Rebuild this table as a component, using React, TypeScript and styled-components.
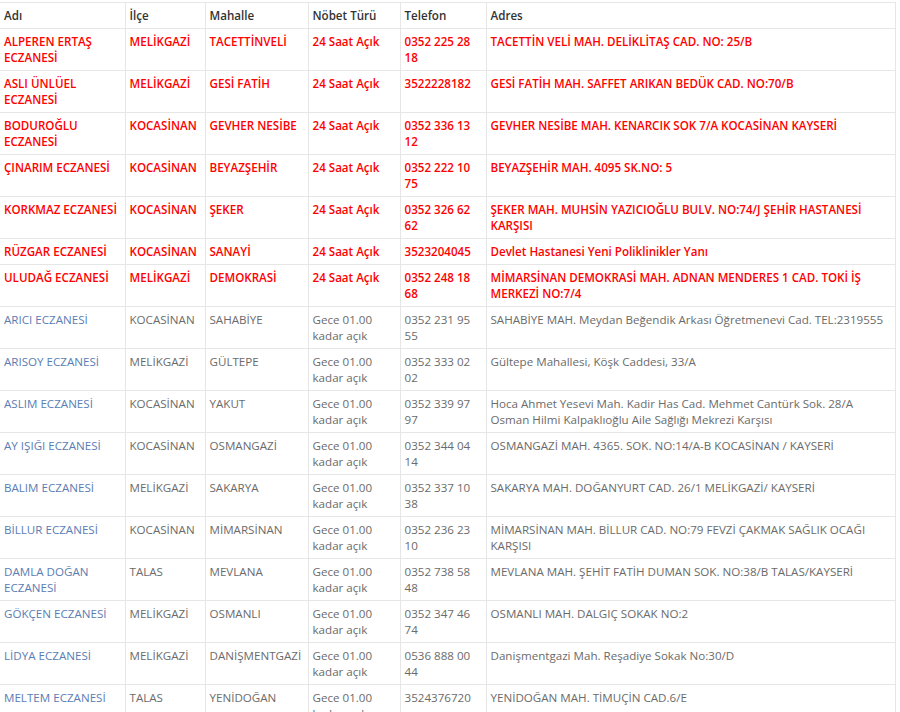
import React from 'react';
import styled, { createGlobalStyle } from 'styled-components';

type Pharmacy = {
  name: string;
  district: string;
  neighbourhood: string;
  duty: string;
  phone: string;
  address: string;
  allDay?: boolean;
};

const pharmacies: Pharmacy[] = [
  { name: 'ALPEREN ERTAŞ ECZANESİ', district: 'MELİKGAZİ', neighbourhood: 'TACETTİNVELİ', duty: '24 Saat Açık', phone: '0352 225 28 18', address: 'TACETTİN VELİ MAH. DELİKLİTAŞ CAD. NO: 25/B', allDay: true },
  { name: 'ASLI ÜNLÜEL ECZANESİ', district: 'MELİKGAZİ', neighbourhood: 'GESİ FATİH', duty: '24 Saat Açık', phone: '3522228182', address: 'GESİ FATİH MAH. SAFFET ARIKAN BEDÜK CAD. NO:70/B', allDay: true },
  { name: 'BODUROĞLU ECZANESİ', district: 'KOCASİNAN', neighbourhood: 'GEVHER NESİBE', duty: '24 Saat Açık', phone: '0352 336 13 12', address: 'GEVHER NESİBE MAH. KENARCIK SOK 7/A KOCASİNAN KAYSERİ', allDay: true },
  { name: 'ÇINARIM ECZANESİ', district: 'KOCASİNAN', neighbourhood: 'BEYAZŞEHİR', duty: '24 Saat Açık', phone: '0352 222 10 75', address: 'BEYAZŞEHİR MAH. 4095 SK.NO: 5', allDay: true },
  { name: 'KORKMAZ ECZANESİ', district: 'KOCASİNAN', neighbourhood: 'ŞEKER', duty: '24 Saat Açık', phone: '0352 326 62 62', address: 'ŞEKER MAH. MUHSİN YAZICIOĞLU BULV. NO:74/J ŞEHİR HASTANESİ KARŞISI', allDay: true },
  { name: 'RÜZGAR ECZANESİ', district: 'KOCASİNAN', neighbourhood: 'SANAYİ', duty: '24 Saat Açık', phone: '3523204045', address: 'Devlet Hastanesi Yeni Poliklinikler Yanı', allDay: true },
  { name: 'ULUDAĞ ECZANESİ', district: 'MELİKGAZİ', neighbourhood: 'DEMOKRASİ', duty: '24 Saat Açık', phone: '0352 248 18 68', address: 'MİMARSİNAN DEMOKRASİ MAH. ADNAN MENDERES 1 CAD. TOKİ İŞ MERKEZİ NO:7/4', allDay: true },
  { name: 'ARICI ECZANESİ', district: 'KOCASİNAN', neighbourhood: 'SAHABİYE', duty: 'Gece 01.00 kadar açık', phone: '0352 231 95 55', address: 'SAHABİYE MAH. Meydan Beğendik Arkası Öğretmenevi Cad. TEL:2319555' },
  { name: 'ARISOY ECZANESİ', district: 'MELİKGAZİ', neighbourhood: 'GÜLTEPE', duty: 'Gece 01.00 kadar açık', phone: '0352 333 02 02', address: 'Gültepe Mahallesi, Köşk Caddesi, 33/A' },
  { name: 'ASLIM ECZANESİ', district: 'KOCASİNAN', neighbourhood: 'YAKUT', duty: 'Gece 01.00 kadar açık', phone: '0352 339 97 97', address: 'Hoca Ahmet Yesevi Mah. Kadir Has Cad. Mehmet Cantürk Sok. 28/A Osman Hilmi Kalpaklıoğlu Aile Sağlığı Mekrezi Karşısı' },
  { name: 'AY IŞIĞI ECZANESİ', district: 'KOCASİNAN', neighbourhood: 'OSMANGAZİ', duty: 'Gece 01.00 kadar açık', phone: '0352 344 04 14', address: 'OSMANGAZİ MAH. 4365. SOK. NO:14/A-B KOCASİNAN / KAYSERİ' },
  { name: 'BALIM ECZANESİ', district: 'MELİKGAZİ', neighbourhood: 'SAKARYA', duty: 'Gece 01.00 kadar açık', phone: '0352 337 10 38', address: 'SAKARYA MAH. DOĞANYURT CAD. 26/1 MELİKGAZİ/ KAYSERİ' },
  { name: 'BİLLUR ECZANESİ', district: 'KOCASİNAN', neighbourhood: 'MİMARSİNAN', duty: 'Gece 01.00 kadar açık', phone: '0352 236 23 10', address: 'MİMARSİNAN MAH. BİLLUR CAD. NO:79 FEVZİ ÇAKMAK SAĞLIK OCAĞI KARŞISI' },
  { name: 'DAMLA DOĞAN ECZANESİ', district: 'TALAS', neighbourhood: 'MEVLANA', duty: 'Gece 01.00 kadar açık', phone: '0352 738 58 48', address: 'MEVLANA MAH. ŞEHİT FATİH DUMAN SOK. NO:38/B TALAS/KAYSERİ' },
  { name: 'GÖKÇEN ECZANESİ', district: 'MELİKGAZİ', neighbourhood: 'OSMANLI', duty: 'Gece 01.00 kadar açık', phone: '0352 347 46 74', address: 'OSMANLI MAH. DALGIÇ SOKAK NO:2' },
  { name: 'LİDYA ECZANESİ', district: 'MELİKGAZİ', neighbourhood: 'DANİŞMENTGAZİ', duty: 'Gece 01.00 kadar açık', phone: '0536 888 00 44', address: 'Danişmentgazi Mah. Reşadiye Sokak No:30/D' },
  { name: 'MELTEM ECZANESİ', district: 'TALAS', neighbourhood: 'YENİDOĞAN', duty: 'Gece 01.00 kadar açık', phone: '3524376720', address: 'YENİDOĞAN MAH. TİMUÇİN CAD.6/E' },
];

const columns = [
  { label: 'Adı', width: 125 },
  { label: 'İlçe', width: 80 },
  { label: 'Mahalle', width: 103 },
  { label: 'Nöbet Türü', width: 92 },
  { label: 'Telefon', width: 86 },
  { label: 'Adres', width: 409 },
];

const GlobalStyle = createGlobalStyle`
  html, body {
    margin: 0;
    padding: 0;
    background: #fff;
    overflow: hidden;
  }
  body {
    font-family: "Open Sans", "Liberation Sans", sans-serif;
    font-size: 11.6px;
  }
`;

const Page = styled.div`
  padding-top: 2px;
`;

const Table = styled.table`
  width: 895px;
  table-layout: fixed;
  border-collapse: collapse;
  border-right: 1px solid #e6e6e6;
  border-top: 1px solid #e6e6e6;
`;

const HeadCell = styled.th`
  text-align: left;
  font-weight: 600;
  color: #333;
  padding: 5px 4px 4px;
  line-height: 16px;
  border: 1px solid #e6e6e6;
  border-left: none;
  vertical-align: top;
`;

const Cell = styled.td<{ $allDay?: boolean }>`
  padding: 5px 4px 4px;
  line-height: 16px;
  vertical-align: top;
  border: 1px solid #e6e6e6;
  color: ${({ $allDay }) => ($allDay ? '#ff0000' : '#6b6b6b')};
  font-weight: ${({ $allDay }) => ($allDay ? 600 : 400)};
  word-wrap: break-word;

  &:first-child {
    border-left: none;
  }
`;

const NameLink = styled.a<{ $allDay?: boolean }>`
  color: ${({ $allDay }) => ($allDay ? '#ff0000' : '#5a7db4')};
  text-decoration: none;
`;

export default function App() {
  return (
    <Page>
      <GlobalStyle />
      <Table>
        <colgroup>
          {columns.map((c) => (
            <col key={c.label} style={{ width: c.width }} />
          ))}
        </colgroup>
        <thead>
          <tr>
            {columns.map((c) => (
              <HeadCell key={c.label}>{c.label}</HeadCell>
            ))}
          </tr>
        </thead>
        <tbody>
          {pharmacies.map((p) => (
            <tr key={p.name}>
              <Cell $allDay={p.allDay}>
                <NameLink href="#" $allDay={p.allDay}>{p.name}</NameLink>
              </Cell>
              <Cell $allDay={p.allDay}>{p.district}</Cell>
              <Cell $allDay={p.allDay}>{p.neighbourhood}</Cell>
              <Cell $allDay={p.allDay}>{p.duty}</Cell>
              <Cell $allDay={p.allDay}>{p.phone}</Cell>
              <Cell $allDay={p.allDay}>{p.address}</Cell>
            </tr>
          ))}
        </tbody>
      </Table>
    </Page>
  );
}
